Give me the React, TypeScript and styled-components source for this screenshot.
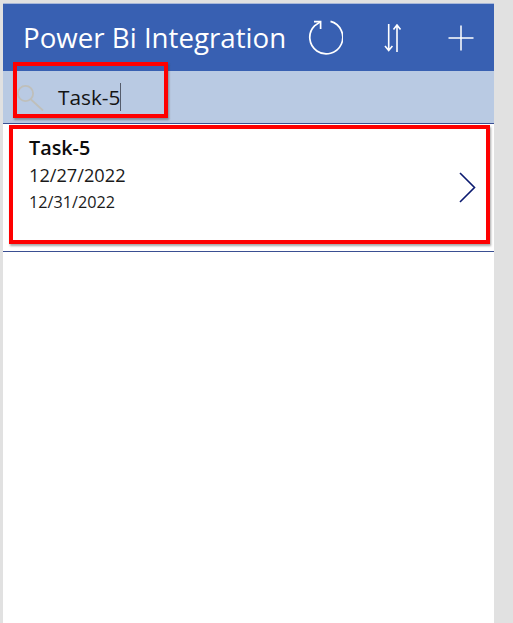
import React from "react";
import styled, { createGlobalStyle } from "styled-components";

const GlobalStyle = createGlobalStyle`
  html, body {
    margin: 0;
    padding: 0;
    background: #e1e1e1;
  }
`;

const Page = styled.div`
  width: 513px;
  height: 623px;
  overflow: hidden;
  box-sizing: border-box;
  padding: 3px 0 0 3px;
  font-family: "Open Sans", "Liberation Sans", sans-serif;
`;

const Screen = styled.div`
  position: relative;
  width: 491px;
  height: 620px;
  background: #ffffff;
`;

const Header = styled.header`
  height: 68px;
  background: #3860b2;
  border-top: 1px solid #a9b8d8;
  box-sizing: border-box;
  display: flex;
  align-items: center;
  padding: 0 20px 0 20px;
`;

const Title = styled.h1`
  margin: 0 0 2px;
  flex: 1;
  color: #ffffff;
  font-size: 27.7px;
  font-weight: 400;
  white-space: nowrap;
`;

const Actions = styled.div`
  display: flex;
  align-items: center;
  gap: 41px;
`;

const IconButton = styled.button<{ $offset?: number }>`
  display: flex;
  padding: 0;
  border: 0;
  background: none;
  margin-left: ${({ $offset }) => $offset ?? 0}px;
`;

const SearchBar = styled.div`
  height: 53px;
  background: #b9cae3;
  border-bottom: 1px solid #3a4f92;
  box-sizing: border-box;
  display: flex;
  align-items: center;
  gap: 14px;
  padding: 0 0 0 14px;
`;

const SearchText = styled.span`
  font-size: 20.8px;
  color: #141414;
  border-right: 1px solid #555c6b;
  line-height: 28px;
`;

const Row = styled.div`
  height: 128px;
  border-bottom: 1px solid #3a4f92;
  box-sizing: border-box;
  display: flex;
  align-items: center;
  justify-content: space-between;
  padding: 0 18px 0 26px;
`;

const RowText = styled.div`
  display: flex;
  flex-direction: column;
  align-self: flex-start;
  padding-top: 10px;
`;

const RowTitle = styled.div`
  font-size: 19.8px;
  font-weight: 600;
  line-height: 28px;
  color: #0c0c0c;
`;

const RowDate = styled.div<{ $size: number }>`
  font-size: ${({ $size }) => $size}px;
  line-height: 27px;
  color: #1a1a1a;
`;

const Highlight = styled.div<{ $left: number; $top: number; $width: number; $height: number }>`
  position: absolute;
  left: ${({ $left }) => $left}px;
  top: ${({ $top }) => $top}px;
  width: ${({ $width }) => $width}px;
  height: ${({ $height }) => $height}px;
  box-sizing: border-box;
  border: 4px solid #fe0000;
  box-shadow: 1px 2px 2px rgba(60, 60, 60, 0.45);
`;

const RefreshIcon = () => (
  <svg width="36" height="36" viewBox="0 0 36 36" fill="none" stroke="#fff" strokeWidth="1.7">
    <path d="M23.5 1.4 A16.5 16.5 0 1 1 7.5 5.8 L13.6 1.6" />
    <path d="M7 1.6 H13.6 V9" />
  </svg>
);

const SortIcon = () => (
  <svg width="18" height="28" viewBox="0 0 18 28" fill="none" stroke="#fff" strokeWidth="1.6">
    <path d="M4.7 0 V26.5 M1 22 L4.7 26.5 L8.4 22" />
    <path d="M13 28 V1 M9.5 5.5 L13 1 L16.5 5.5" />
  </svg>
);

const PlusIcon = () => (
  <svg width="26" height="26" viewBox="0 0 26 26" fill="none" stroke="#fff" strokeWidth="1.5">
    <path d="M13 0.5 V25.5 M0.5 13 H25.5" />
  </svg>
);

const SearchIcon = () => (
  <svg width="27" height="27" viewBox="0 0 27 27" fill="none" stroke="#bfbfba" strokeWidth="1.8">
    <circle cx="8.5" cy="9.5" r="7.6" />
    <path d="M14 15.5 L26 26.5" />
  </svg>
);

const ChevronIcon = () => (
  <svg width="17" height="31" viewBox="0 0 17 31" fill="none" stroke="#0b1a70" strokeWidth="1.6">
    <path d="M1 1 L15.5 15.5 L1 30" />
  </svg>
);

export default function App(): React.ReactNode {
  return (
    <>
      <GlobalStyle />
      <Page>
        <Screen>
          <Header>
            <Title>Power Bi Integration</Title>
            <Actions>
              <IconButton>
                <RefreshIcon />
              </IconButton>
              <IconButton>
                <SortIcon />
              </IconButton>
              <IconButton $offset={5}>
                <PlusIcon />
              </IconButton>
            </Actions>
          </Header>
          <SearchBar>
            <SearchIcon />
            <SearchText>Task-5</SearchText>
          </SearchBar>
          <Row>
            <RowText>
              <RowTitle>Task-5</RowTitle>
              <RowDate $size={18.2}>12/27/2022</RowDate>
              <RowDate $size={16.2}>12/31/2022</RowDate>
            </RowText>
            <ChevronIcon />
          </Row>
          <Highlight $left={10} $top={59} $width={155} $height={56} />
          <Highlight $left={6} $top={122} $width={481} $height={119} />
        </Screen>
      </Page>
    </>
  );
}
